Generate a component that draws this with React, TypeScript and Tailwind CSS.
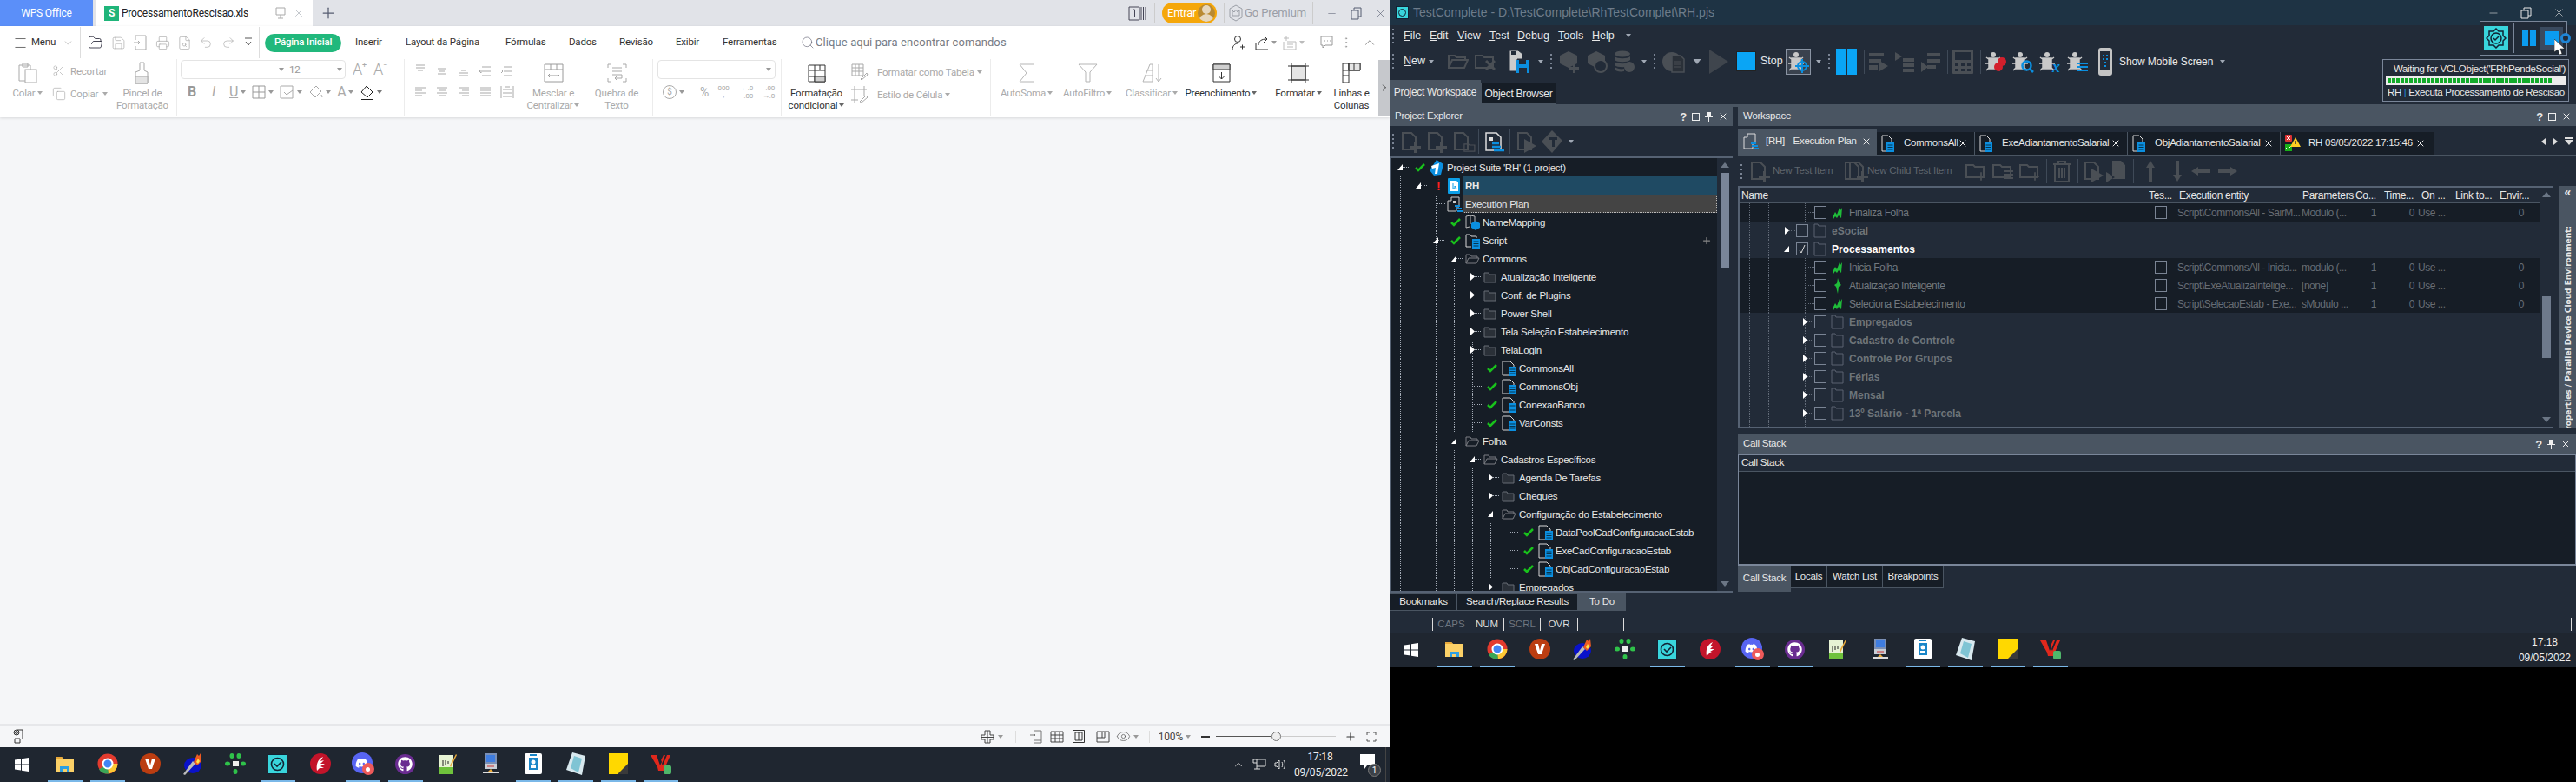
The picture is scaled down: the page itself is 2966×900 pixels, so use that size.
import React from "react";
import { Scissors, Copy, FolderOpen, Save, Printer, Undo2, Redo2, Search, ChevronDown, ChevronUp, ChevronRight, X, Minus, Plus, Menu, FileSearch, EllipsisVertical, Eye } from "lucide-react";
import { FaGithub, FaDiscord } from "react-icons/fa";

const Caret = ({ c = "#999", cls = "" }: { c?: string; cls?: string }) => (
  <svg width="6" height="4" viewBox="0 0 6 4" className={cls}><path d="M0 0h6L3 4z" fill={c} /></svg>
);
const G = "#a9a9a9";
const Sv = ({ w = 22, h = 22, vb = "0 0 22 22", c = G, sw = 1, children }: any) => (
  <svg width={w} height={h} viewBox={vb} fill="none" stroke={c} strokeWidth={sw}>{children}</svg>
);

/* ---------- WPS ribbon drawings ---------- */
const Paste = () => <Sv w={22} h={24} vb="0 0 22 24"><path d="M4 3h10v18H1V3zM5 1h6v4H5z" /><rect x="8" y="8" width="13" height="15" fill="#fff" /></Sv>;
const Brush = () => <Sv w={20} h={26} vb="0 0 20 26"><path d="M7 1h5v9l4 2v13H2V12l5-2z" /><path d="M2 17h14v8H2z" fill="#e4e4e4" /></Sv>;
const Lines = ({ k }: { k: number }) => {
  const d = ["M3 4h10M5 7h6M3 1h10", "M3 5h10M5 8h6M3 11h10", "M5 7h6M3 10h10M3 13h10", "M4 3h10M4 8h10M4 13h10M1 8l2-2v4z", "M4 3h10M4 8h10M4 13h10M1 6l2 2-2 2",
    "M2 3h12M2 6h8M2 9h12M2 12h8", "M2 3h12M4 6h8M2 9h12M4 12h8", "M2 3h12M6 6h8M2 9h12M6 12h8", "M2 3h12M2 6h12M2 9h12M2 12h12", "M1 1v14M15 1v14M3 5h10M3 9h10M3 13h10M5 2h6"][k];
  return <Sv w={16} h={16} vb="0 0 16 16"><path d={d} /></Sv>;
};
const Merge = () => <Sv w={23} h={22} vb="0 0 23 22" c="#9a9a9a"><path d="M1 1h21v20H1zM1 7h21M8 1v6M15 1v6M5 14h13M5 14l2-2M5 14l2 2M18 14l-2-2M18 14l-2 2" /></Sv>;
const Wrap = () => <Sv w={23} h={22} vb="0 0 23 22"><path d="M1 5V1h4M18 1h4v4M1 17v4h4M22 17v4h-4M6 5h11M6 9h11M6 13h11v4H9M9 17l2-2M9 17l2 2" /></Sv>;
const CondF = () => <Sv w={21} h={21} vb="0 0 21 21" c="#333"><path d="M1 1h19v19H1zM1 7h19M1 14h19M8 1v19M14 1v6" /><path d="M8 14h12v6H8z" fill="#cfcfcf" /></Sv>;
const TableF = () => <Sv w={20} h={20} vb="0 0 20 20"><path d="M1 1h13v13H1zM1 5h13M1 9h13M5 1v13M9 1v13M11 18l7-7 1 2-7 6z" /></Sv>;
const StyleF = () => <Sv w={20} h={20} vb="0 0 20 20"><path d="M4 0v20M0 4h18M15 0v12M0 16h8M10 18l7-7 2 2-7 6z" /></Sv>;
const SigmaI = () => <Sv w={20} h={22} vb="0 0 20 22" c="#b5b5b5"><path d="M18 1H2l8 10-8 10h16" /></Sv>;
const Fun = () => <Sv w={23} h={22} vb="0 0 23 22" c="#b5b5b5"><path d="M1 1h21l-8 9v11H9V10z" /></Sv>;
const Sort = () => <Sv w={23} h={22} vb="0 0 23 22" c="#b5b5b5"><path d="M1 21L9 1h3v20zM3 14h9M5 8h7M19 1v20M19 21l-3-4M19 21l3-4" /></Sv>;
const Fill = () => <Sv w={21} h={22} vb="0 0 21 22" c="#333"><path d="M1 1h19v20H1zM1 7h19" /><path d="M1 1h19v6H1z" fill="#cfcfcf" /><path d="M10.500 10v8M10.500 18l-3-3M10.500 18l3-3" /></Sv>;
const Fmt = () => <Sv w={24} h={22} vb="0 0 24 22" c="#333"><path d="M4 3h16v16H4z" fill="#e4e4e4" /><path d="M4 0v22M20 0v22M0 3h24M0 19h24" /></Sv>;
const RC = () => <Sv w={22} h={24} vb="0 0 22 24" c="#333"><path d="M1 1h20v8H1zM1 9v14h7V1M14 1v8" /><path d="M8 1h13v8H8z" fill="#e4e4e4" /><path d="M1 15h7M8 1v8M14 1v8" /></Sv>;

/* ---------- Task bar ---------- */
const tbIcons: [React.ReactNode, boolean][] = [
  [<svg width="23" height="20" viewBox="0 0 23 20"><path d="M1 2h7l2 2h12v15H1z" fill="#fbd067" /><path d="M1 2h7l2 2H1z" fill="#e8a93a" /><path d="M6 13h11v6h-3v-3H9v3H6z" fill="#2d9fe3" /></svg>, true],
  [<svg width="24" height="24" viewBox="0 0 24 24"><circle cx="12" cy="12" r="11.500" fill="#e33b2e" /><path d="M12 12L2 18.500A11.500 11.500 0 0 0 13 23.500z" fill="#3aa757" /><path d="M12 12h11.500A11.500 11.500 0 0 1 13 23.500z" fill="#fcc934" /><circle cx="12" cy="12" r="5.500" fill="#4285f4" stroke="#fff" strokeWidth="2" /></svg>, true],
  [<svg width="24" height="24" viewBox="0 0 24 24"><circle cx="12" cy="12" r="12" fill="#bb3d11" /><path d="M6 6h4l2 8 2-8h4l-4 12h-4z" fill="#fff" /></svg>, false],
  [<svg width="24" height="26" viewBox="0 0 24 26"><ellipse cx="12" cy="15" rx="10" ry="9" fill="#0a12c9" /><path d="M1 25L12 10l3 3L3 26z" fill="#bbb" /><path d="M13 11l4-9 2 2 2-3 1 9-5 5z" fill="#ef5a22" /><path d="M16 11l2-4 2 3-2 3z" fill="#fce24b" /></svg>, false],
  [<svg width="24" height="24" viewBox="0 0 24 24" fill="#2fc24a"><rect x="9" y="9" width="7" height="6" fill="#eee" /><ellipse cx="8" cy="3" rx="2.500" ry="3" /><ellipse cx="16" cy="3" rx="2.500" ry="3" /><ellipse cx="3" cy="12" rx="3" ry="2.500" /><ellipse cx="21" cy="12" rx="3" ry="2.500" /><ellipse cx="12" cy="21" rx="2.500" ry="3" /></svg>, false],
  [<svg width="23" height="23" viewBox="0 0 23 23"><rect width="23" height="23" fill="#39d5dc" stroke="#123" strokeWidth="2" /><circle cx="11.500" cy="11.500" r="7" fill="none" stroke="#123" strokeWidth="1.600" /><path d="M8 11l3 3 5-5" fill="none" stroke="#123" strokeWidth="1.600" /></svg>, true],
  [<svg width="24" height="24" viewBox="0 0 24 24"><circle cx="12" cy="12" r="12" fill="#c3142a" /><path d="M8 20c-1-6 0-13 7-16l-3 5 4-1-4 4 5 0-5 3 4 2-5 0z" fill="#fff" /></svg>, false],
  [<div className="relative w-[26px] h-[26px]"><div className="w-[24px] h-[24px] rounded-full bg-[#5865f2] flex items-center justify-center"><FaDiscord size={15} color="#fff" /></div><div className="absolute right-0 bottom-0 w-[14px] h-[14px] rounded-full bg-[#ee5a5a] flex items-center justify-center"><div className="w-[5px] h-[5px] bg-white rounded-full" /></div></div>, true],
  [<div className="w-[23px] h-[23px] rounded-full bg-[#6a2c91] flex items-center justify-center"><FaGithub size={17} color="#fff" /></div>, true],
  [<svg width="22" height="25" viewBox="0 0 22 25"><path d="M1 2h16v22H1z" fill="#e7f3d4" /><path d="M1 16h16v8H1z" fill="#6fc23c" /><path d="M5 8v7M8 8v5M11 9v3" stroke="#222" /><path d="M13 14l7-13 1 1-7 14z" fill="#e8a93a" /></svg>, false],
  [<svg width="20" height="24" viewBox="0 0 20 24"><rect x="3" y="0" width="14" height="12" fill="#7a8fb5" /><rect x="5" y="2" width="10" height="8" fill="#3f7de0" /><rect x="3" y="12" width="14" height="6" fill="#c9ced6" /><path d="M6 15h8" stroke="#c33" /><path d="M10 18l-3 3h6z" fill="#e8a93a" /><path d="M1 22h18" stroke="#ddd" strokeWidth="2" /></svg>, false],
  [<svg width="20" height="24" viewBox="0 0 20 24"><rect width="20" height="24" rx="2" fill="#fff" /><rect x="6" y="1" width="8" height="2" fill="#1a86c8" /><rect x="5" y="5" width="10" height="14" fill="#1a86c8" /><circle cx="10" cy="10" r="2.500" fill="#fff" /><path d="M7 17h6v-3H7z" fill="#fff" /></svg>, true],
  [<svg width="22" height="26" viewBox="0 0 22 26"><path d="M7 0l15 4-4 22L0 20z" fill="#d8e8ee" /><path d="M9 4l9 3-4 16-9-5z" fill="#7fc4d4" /></svg>, true],
  [<svg width="22" height="24" viewBox="0 0 22 24"><rect width="22" height="24" fill="#ffd800" /><path d="M22 12v12H10z" fill="#3a3a3a" /></svg>, true],
  [<svg width="26" height="24" viewBox="0 0 26 24"><path d="M1 2h8l3 8 4-8h8l-8 18h-6l-1-4z" fill="#e0281c" /><path d="M8 2h3l3 8-2 4zM18 2l2 0-5 12-1-2z" fill="#1b2330" /><rect x="16" y="14" width="9" height="10" rx="2" fill="#4fb66a" /></svg>, true],
];
function Taskbar({ children }: { children?: React.ReactNode }) {
  return (
    <div className="h-[40px] bg-[#1f2630] flex shrink-0">
      <div className="w-[50px] flex items-center justify-center">
        <svg width="16" height="16" viewBox="0 0 16 16" fill="#fff"><path d="M0 2.500l7-1v6H0zM8 1.300l8-1.300v7.500H8zM0 8.500h7v6l-7-1zM8 8.500h8V16l-8-1.200z" /></svg>
      </div>
      {tbIcons.map(([ic, on], i) => (
        <div key={i} className={"w-[40px] mx-[4.5px] flex items-center justify-center border-b-2 " + (on ? "border-[#7ab8e8]" : "border-transparent")}>{ic}</div>
      ))}
      {children}
    </div>
  );
}

/* ---------- WPS ---------- */
const Big = ({ icon, l1, l2, dim, w }: any) => (
  <div className={"flex flex-col items-center shrink-0 " + w + (dim ? " text-[#aaaaaa]" : " text-[#333333]")}>
    <div className="h-[32px] flex items-center justify-center">{icon}</div>
    <div className="h-[14px] leading-[14px] flex items-center gap-[2px] whitespace-nowrap">{l1}{!l2 && <Caret c={dim ? "#aaa" : "#666"} />}</div>
    {l2 && <div className="h-[14px] leading-[14px] flex items-center gap-[2px] whitespace-nowrap">{l2}</div>}
  </div>
);

function Wps() {
  const tabs: [string, string][] = [["Inserir", "w-[58px]"], ["Layout da Página", "w-[115px]"], ["Fórmulas", "w-[73px]"], ["Dados", "w-[58px]"], ["Revisão", "w-[65px]"], ["Exibir", "w-[54px]"], ["Ferramentas", "w-[90px]"]];
  return (
    <div className="w-[1600px] h-[900px] flex flex-col shrink-0 font-['Roboto',sans-serif] text-[11.5px] tracking-[-0.2px] bg-[#f5f6f8]">
      <div className="h-[30px] bg-[#e1e3e8] flex shrink-0 text-[#333]">
        <div className="w-[107px] bg-[#5b8ff9] text-white text-[12px] flex items-center justify-center">WPS Office</div>
        <div className="ml-[3px] w-[250px] bg-white flex items-center pl-[10px]">
          <div className="w-[17px] h-[17px] bg-[#1fb57a] text-white text-[12px] leading-[17px] text-center font-bold">S</div>
          <span className="ml-[3px] text-[12px] tracking-[-0.2px] text-[#222]">ProcessamentoRescisao.xls</span>
          <svg className="ml-auto" width="12" height="14" viewBox="0 0 12 14" fill="none" stroke="#a9a9a9"><path d="M1 1h10v8H1zM6 9v4M3 13h6" /></svg>
          <X size={14} strokeWidth={1} color="#9aa0a8" className="ml-[8px] mr-[9px]" />
        </div>
        <Plus size={20} strokeWidth={1.500} color="#555c70" className="ml-[8px] self-center" />
        <div className="ml-[911px] flex items-center">
          <svg width="21" height="17" viewBox="0 0 21 17" fill="none" stroke="#445"><path d="M1 1h12v15H1zM15 1v15M17.500 1v15M20 1v15" /><path d="M6 4h1.500v9" /></svg>
          <div className="w-px h-[22px] bg-[#ccc] ml-[9px]" />
          <div className="ml-[8px] w-[63px] h-[24px] bg-[#f5a70a] rounded-full flex items-center pl-[6px] text-white text-[13px]">Entrar
            <div className="ml-auto mr-[2px] w-[20px] h-[20px] rounded-full bg-[#b98a32] flex flex-col items-center overflow-hidden">
              <div className="w-[10px] h-[10px] mt-[1px] rounded-full bg-[#e6d7bd]" /><div className="w-[18px] h-[10px] rounded-t-full bg-[#e6d7bd]" />
            </div>
          </div>
          <div className="w-px h-[22px] bg-[#ccc] ml-[8px]" />
          <svg className="ml-[5px]" width="16" height="20" viewBox="0 0 16 20" fill="none" stroke="#9a9ea6"><path d="M8 1l7 4v10l-7 4-7-4V5z" /><path d="M4 13V7l2 2 2-3 2 3 2-2v6z" /></svg>
          <span className="ml-[2px] text-[#9a9ea6] text-[13px] tracking-[-0.1px] w-[66px] whitespace-nowrap">Go Premium</span>
          <div className="w-px h-[26px] bg-[#ccc] ml-[12px]" />
          <Minus size={13} strokeWidth={1} color="#555c70" className="ml-[15px]" />
          <svg className="ml-[15px]" width="13" height="15" viewBox="0 0 13 15" fill="none" stroke="#555c70"><path d="M1 4h8v10H1zM4 4V1h8v10H9" /></svg>
          <X size={15} strokeWidth={1} color="#555c70" className="ml-[14px]" />
        </div>
      </div>

      <div className="bg-white h-[105px] shrink-0 shadow-[0_1px_3px_rgba(0,0,0,0.12)] relative">
        <div className="h-[38px] flex items-center text-[#333]">
          <Menu size={17} strokeWidth={1} color="#333" className="ml-[15px]" />
          <span className="ml-[4px] w-[30px]">Menu</span>
          <ChevronDown size={13} strokeWidth={1} color="#888" className="ml-[6px]" />
          <div className="w-px h-[36px] bg-[#ddd] ml-[7px]" />
          <FolderOpen size={18} strokeWidth={1.100} color="#223" className="ml-[8px]" />
          <Save size={17} strokeWidth={1} color={G} className="ml-[9px]" />
          <svg className="ml-[8px]" width="16" height="18" viewBox="0 0 16 18" fill="none" stroke={G}><path d="M3 6V1h12v16H3v-4M1 9h7l-2-2M8 9l-2 2" /></svg>
          <Printer size={17} strokeWidth={1} color={G} className="ml-[10px]" />
          <FileSearch size={17} strokeWidth={1} color={G} className="ml-[8px]" />
          <Undo2 size={16} strokeWidth={1} color={G} className="ml-[8px]" />
          <Redo2 size={16} strokeWidth={1} color={G} className="ml-[10px]" />
          <svg className="ml-[11px]" width="8" height="12" viewBox="0 0 8 12" fill="none" stroke="#555"><path d="M0 1h8M1 5l3 4 3-4" /></svg>
          <div className="w-px h-[36px] bg-[#ddd] ml-[8px]" />
          <div className="ml-[6px] mr-[16px] w-[88px] h-[21px] rounded-full bg-[#21b87c] text-white flex items-center justify-center font-medium whitespace-nowrap">Página Inicial</div>
          {tabs.map(([t, w]) => <span key={t} className={w + " whitespace-nowrap shrink-0"}>{t}</span>)}
          <Search size={16} strokeWidth={1} color="#667" />
          <span className="ml-[1px] text-[#777c85] text-[13px] tracking-[0.1px] w-[230px] whitespace-nowrap">Clique aqui para encontrar comandos</span>
          <div className="ml-auto flex items-center mr-[14px]">
            <svg width="15" height="18" viewBox="0 0 15 18" fill="none" stroke="#333"><circle cx="7" cy="5" r="3.500" /><path d="M1 17c0-5 4-7 6-7M10 14h5M12.500 11.500v5" /></svg>
            <svg className="ml-[12px]" width="16" height="18" viewBox="0 0 16 18" fill="none" stroke="#333"><path d="M1 9v8h14M4 12c0-5 4-7 9-7M10 1l4 4-4 4" /></svg>
            <Caret c="#999" cls="ml-[3px]" />
            <svg className="ml-[7px]" width="16" height="18" viewBox="0 0 16 18" fill="none" stroke="#bbb"><path d="M4 1v6M1 4h6M5 8h10v9H1V8M5 11h7M5 14h7" /></svg>
            <Caret c="#bbb" cls="ml-[3px]" />
            <div className="w-px h-[22px] bg-[#ddd] ml-[7px]" />
            <svg className="ml-[10px]" width="15" height="16" viewBox="0 0 15 16" fill="none" stroke="#999"><path d="M1 1h13v10H6l-3 3v-3H1zM5 6h1M8 6h1M11 6h1" /></svg>
            <EllipsisVertical size={16} strokeWidth={1.200} color="#999" className="ml-[7px]" />
            <ChevronUp size={18} strokeWidth={1} color="#666" className="ml-[10px]" />
          </div>
        </div>
        <div className="flex h-[65px] leading-[14px] overflow-hidden">
          {/* clipboard */}
          <div className="w-[204px] flex border-r border-[#ececec] shrink-0 text-[#aaaaaa]">
            <Big w="w-[47px] ml-[8px]" icon={<Paste />} l1="Colar" dim />
            <div className="w-[70px] pl-[5px] flex flex-col shrink-0">
              <div className="h-[25px] mt-[1px] flex items-center gap-[6px]"><Scissors size={15} strokeWidth={1} color={G} />Recortar</div>
              <div className="h-[27px] flex items-center gap-[5px]"><Copy size={16} strokeWidth={1} color={G} />Copiar<Caret c="#aaa" /></div>
            </div>
            <Big w="w-[78px]" icon={<Brush />} l1="Pincel de" l2="Formatação" dim />
          </div>
          {/* font */}
          <div className="w-[262px] pl-[4px] border-r border-[#ececec] shrink-0 text-[#aaaaaa]">
            <div className="flex items-center">
              <div className="w-[190px] h-[22px] mt-[1px] border border-[#e4e4e4] rounded-sm flex items-center">
                <div className="w-[122px] h-full border-r border-[#e4e4e4] flex items-center justify-end pr-[3px]"><Caret c="#999" /></div>
                <span className="ml-[2px] text-[#999]">12</span><Caret c="#999" cls="ml-auto mr-[3px]" />
              </div>
              <span className="ml-[8px] text-[18px] font-light">A</span><span className="text-[9px] -mt-[10px]">+</span>
              <span className="ml-[8px] text-[18px] font-light">A</span><span className="text-[9px] -mt-[10px]">−</span>
            </div>
            <div className="flex items-center h-[18px] mt-[6px] text-[#aaa]">
              <span className="ml-[8px] text-[16px] font-bold text-[#999] w-[18px]">B</span>
              <span className="ml-[10px] text-[16px] italic w-[14px]">I</span>
              <span className="ml-[6px] text-[16px] underline">U</span><Caret cls="ml-[3px]" />
              <svg className="ml-[7px]" width="16" height="16" viewBox="0 0 16 16" fill="none" stroke="#999"><path d="M1 1h14v14H1zM8 1v14M1 8h14" /></svg><Caret cls="ml-[3px]" />
              <svg className="ml-[7px]" width="17" height="16" viewBox="0 0 17 16" fill="none" stroke="#aaa"><path d="M1 1h14v14H1zM8 4l1 1M5 8l3 3 7-5" /></svg><Caret cls="ml-[3px]" />
              <svg className="ml-[7px]" width="17" height="16" viewBox="0 0 17 16" fill="none" stroke="#aaa"><path d="M2 8l7-7 6 6-7 7z" /><path d="M15 11l1 3" /></svg><Caret cls="ml-[3px]" />
              <span className="ml-[7px] text-[16px]">A</span><Caret cls="ml-[3px]" />
              <svg className="ml-[7px]" width="17" height="17" viewBox="0 0 17 17" fill="#222"><path d="M8 1l7 7-6 6-7-6z" fill="none" stroke="#222" /><path d="M2 16h13v1H2z" /></svg><Caret c="#777" cls="ml-[3px]" />
            </div>
          </div>
          {/* alignment */}
          <div className="w-[286px] pl-[5px] flex border-r border-[#ececec] shrink-0">
            <div className="w-[125px] shrink-0 grid grid-cols-5 grid-rows-2 pt-[2px] h-[50px]">
              {[0, 1, 2, 3, 4, 5, 6, 7, 8, 9].map((k) => <div key={k} className="flex items-center justify-center"><Lines k={k} /></div>)}
            </div>
            <Big w="w-[74px] ml-[4px]" icon={<Merge />} l1="Mesclar e" l2={<>Centralizar<Caret c="#aaa" /></>} dim />
            <Big w="w-[72px]" icon={<Wrap />} l1="Quebra de" l2="Texto" dim />
          </div>
          {/* number */}
          <div className="w-[148px] pl-[5px] border-r border-[#ececec] shrink-0 text-[#aaa]">
            <div className="w-[136px] h-[22px] mt-[1px] border border-[#e4e4e4] rounded-sm flex items-center justify-end pr-[4px]"><Caret c="#999" /></div>
            <div className="flex items-center h-[18px] mt-[6px]">
              <div className="ml-[6px] w-[16px] h-[16px] rounded-full border border-[#aaa] text-[10px] text-center leading-[14px]">$</div><Caret cls="ml-[3px]" />
              <span className="ml-[18px] text-[14px]">%</span>
              <span className="ml-[8px] text-[8px] leading-[8px] w-[18px] text-center">000<br />,</span>
              <span className="ml-[7px] text-[8px] leading-[9px] w-[18px] text-right">←.0<br />.00</span>
              <span className="ml-[7px] text-[8px] leading-[9px] w-[18px] text-right">.00<br />→.0</span>
            </div>
          </div>
          {/* styles */}
          <div className="w-[241px] flex border-r border-[#ececec] shrink-0">
            <Big w="w-[80px]" icon={<CondF />} l1="Formatação" l2={<>condicional<Caret c="#666" /></>} />
            <div className="flex flex-col text-[#aaa]">
              <div className="h-[26px] mt-[2px] flex items-center gap-[10px] whitespace-nowrap"><TableF /><span className="flex items-center gap-[3px]">Formatar como Tabela<Caret c="#aaa" /></span></div>
              <div className="h-[26px] flex items-center gap-[10px] whitespace-nowrap"><StyleF /><span className="flex items-center gap-[3px]">Estilo de Célula<Caret c="#aaa" /></span></div>
            </div>
          </div>
          <div className="w-[323px] flex border-r border-[#ececec] shrink-0">
            <Big w="w-[82px]" icon={<SigmaI />} l1="AutoSoma" dim />
            <Big w="w-[58px]" icon={<Fun />} l1="AutoFiltro" dim />
            <Big w="w-[90px]" icon={<Sort />} l1="Classificar" dim />
            <Big w="w-[70px]" icon={<Fill />} l1="Preenchimento" />
          </div>
          <Big w="w-[62px]" icon={<Fmt />} l1="Formatar" />
          <Big w="w-[60px]" icon={<RC />} l1="Linhas e" l2="Colunas" />
        </div>
        <div className="absolute right-0 top-[39px] w-[13px] h-[64px] bg-[#c6c8cc] flex items-center justify-center"><ChevronRight size={12} color="#333" /></div>
      </div>

      <div className="flex-1" />
      <div className="h-[27px] shrink-0 border-t-2 border-[#e6e7ea] flex items-center">
        <svg className="ml-[15px]" width="12" height="17" viewBox="0 0 12 17" fill="none" stroke="#333"><circle cx="4" cy="4" r="3" /><circle cx="4" cy="4" r="1.500" /><path d="M4 1h7v10M8 11H2v5h6z" /></svg>
        <div className="ml-auto flex items-center mr-[15px]">
          <svg width="16" height="16" viewBox="0 0 16 16" fill="none" stroke="#444"><path d="M5 1h6v5h4v5h-4v4H5v-4H1V6h4zM1 8.500h14M8 1v14" /></svg>
          <Caret cls="ml-[4px]" />
          <div className="w-px h-[14px] bg-[#ddd] ml-[14px]" />
          <svg className="ml-[16px]" width="14" height="16" viewBox="0 0 14 16" fill="none" stroke="#777"><path d="M4 1h9v14H4M4 12h9M0 6h6M4 4l2 2-2 2" /></svg>
          <svg className="ml-[9px]" width="16" height="14" viewBox="0 0 16 14" fill="none" stroke="#444"><path d="M1 1h14v12H1zM1 5h14M1 9h14M6 1v12M11 1v12" /></svg>
          <svg className="ml-[10px]" width="14" height="15" viewBox="0 0 14 15" fill="none" stroke="#333"><path d="M0.500 0.500h13v14H0.500zM3 3h8v9H3zM7 3v9" /></svg>
          <svg className="ml-[13px]" width="16" height="14" viewBox="0 0 16 14" fill="none" stroke="#444"><path d="M1 1h14v12H1zM1 8h6V1M7 8h3V1" /></svg>
          <Eye size={17} strokeWidth={1} color="#555" className="ml-[7px]" />
          <Caret cls="ml-[3px]" />
          <div className="w-px h-[14px] bg-[#ddd] ml-[12px]" />
          <span className="ml-[10px] text-[#444] text-[12px]">100%</span>
          <Caret cls="ml-[3px]" />
          <div className="ml-[12px] w-[10px] h-[2px] bg-[#333]" />
          <div className="ml-[7px] w-[138px] flex items-center">
            <div className="w-[64px] h-px bg-[#555]" />
            <div className="w-[11px] h-[11px] rounded-full border border-[#777] bg-[#eee] shrink-0" />
            <div className="flex-1 h-px bg-[#ccc]" />
          </div>
          <Plus size={14} strokeWidth={2} color="#333" className="ml-[10px]" />
          <svg className="ml-[11px]" width="12" height="12" viewBox="0 0 12 12" fill="none" stroke="#555"><path d="M1 4V1h3M8 1h3v3M1 8v3h3M8 11h3V8" /></svg>
        </div>
      </div>
      <Taskbar>
        <div className="flex-1 flex items-center justify-end pr-[4px] text-white">
          <ChevronUp size={14} strokeWidth={1.500} color="#ddd" />
          <svg className="ml-[9px]" width="16" height="14" viewBox="0 0 16 14" fill="none" stroke="#ddd"><path d="M1 1h14v8H5V1M5 9v3M2 12h7M1 1v4h4" /></svg>
          <svg className="ml-[9px]" width="14" height="12" viewBox="0 0 14 12" fill="none" stroke="#ddd"><path d="M1 4h2l3-3v10L3 8H1zM9 3c1 2 1 4 0 6M11 1c2 3 2 7 0 10" /></svg>
          <div className="ml-[9px] w-[60px] text-center text-[#eee] text-[12px] leading-[18px]">17:18<br />09/05/2022</div>
          <div className="ml-[16px] relative w-[24px] h-[24px]">
            <svg width="17" height="18" viewBox="0 0 17 18" fill="#fff"><path d="M0 0h17v13H8l-3 4v-4H0z" /></svg>
            <div className="absolute right-[0px] bottom-[-2px] w-[15px] h-[15px] rounded-full bg-[#3c4148] border border-[#777] text-[10px] text-center leading-[13px]">1</div>
          </div>
          <div className="ml-[5px] w-px h-[40px] bg-[#444]" />
        </div>
      </Taskbar>
    </div>
  );
}

/* ---------- TestComplete drawings ---------- */
const D = "#4a4f55";
const Doc = ({ c = D, children }: any) => (
  <svg width="24" height="26" viewBox="0 0 24 26" fill="none">
    <path d="M3 3h10l5 5v14H3z" stroke={c} strokeWidth="2" />
    {children}
  </svg>
);
const DocPlus = () => <Doc><path d="M16 13h3v5h5v3h-5v5h-3v-5h-5v-3h5z" fill={D} /></Doc>;
const DocRun = () => <Doc><path d="M10 10l14 8-14 8z" fill={D} /></Doc>;
const Fold = ({ c = D, w = 24, h = 20 }: any) => <svg width={w} height={h} viewBox="0 0 24 20" fill="none" stroke={c} strokeWidth="2"><path d="M1 3h8l2 2h10v12H1z" /></svg>;
const FoldOpen = ({ c = D, w = 24, h = 20 }: any) => <svg width={w} height={h} viewBox="0 0 24 20" fill="none" stroke={c} strokeWidth="2"><path d="M1 17V3h7l2 2h10v3M1 17l4-9h18l-4 9z" /></svg>;
const Cube = ({ children }: any) => <svg width="24" height="26" viewBox="0 0 24 26" fill={D}><path d="M11 1l10 5v9l-10 5-10-5V6z" />{children}</svg>;
const Bug = ({ children, w = 24 }: any) => (
  <svg width={w} height="24" viewBox="0 0 24 24" fill="#c9c9c9">
    <circle cx="9" cy="4" r="3" /><path d="M4 8h10v12H4zM1 7l4 3M17 7l-4 3M0 14h5M18 14h-5M1 22l4-4M17 22l-4-4" stroke="#c9c9c9" strokeWidth="1.500" />
    {children}
  </svg>
);
const Rows = () => <svg width="24" height="24" viewBox="0 0 24 24" fill={D}><path d="M1 2h17v4H1zM1 9h14v4H1zM1 16h10v5H1z" /><path d="M13 11l10 6-10 6z" /></svg>;
const Rows2 = () => <svg width="24" height="24" viewBox="0 0 24 24" fill={D}><path d="M1 1l8 5-8 5zM10 8h13v4H10zM10 14h13v4H10zM10 20h13v4H10z" /></svg>;
const Rows3 = () => <svg width="24" height="24" viewBox="0 0 24 24" fill={D}><path d="M8 2h15v4H8zM8 9h15v4H8zM8 16h10v4H8zM1 12l8 6-8 6z" /></svg>;
const GripV = ({ cls = "" }: { cls?: string }) => (
  <div className={"flex flex-col gap-[3px] " + cls}>{[0, 1, 2, 3].map((i) => <div key={i} className="w-[2px] h-[2px] bg-[#7a8494]" />)}</div>
);
const Sep = ({ cls = "" }: { cls?: string }) => <div className={"w-px h-[28px] bg-[#3f4a58] " + cls} />;

const FileBlue = () => (
  <svg width="20" height="18" viewBox="0 0 20 18" fill="none"><path d="M1 1h9l4 4v12H1z" stroke="#d8d8d8" /><rect x="8" y="7" width="9" height="11" fill="#0b8fe0" /><path d="M9.500 10h6M9.500 12.500h6M9.500 15h6" stroke="#04344f" /></svg>
);
const FolderC = () => <svg width="15" height="14" viewBox="0 0 15 14"><path d="M1 2h5l1 2h7v9H1z" fill="#2a3038" stroke="#666c74" /></svg>;
const FolderO = () => <svg width="17" height="14" viewBox="0 0 17 14" fill="none" stroke="#7c7f84"><path d="M1 12V2h5l1 2h7v2M1 12l3-6h12l-3 6z" /></svg>;
const Check = () => <svg width="12" height="10" viewBox="0 0 12 10" fill="none" stroke="#19c21c" strokeWidth="2.500"><path d="M1 5l3 3 7-7" /></svg>;
const Exp = ({ open, x }: { open: boolean; x: number }) => (
  <svg className="absolute top-[6px]" style={{ left: x - 3 }} width="7" height="9" viewBox="0 0 7 9" fill="#fff">
    {open ? <path d="M6 1v7H0z" /> : <path d="M1 0l5 4.500L1 9z" />}
  </svg>
);

type TreeR = { t: string; x: number; icon: string; check?: boolean; exp?: [number, boolean]; stub?: number; g: number[]; bold?: boolean; sel?: string; plus?: boolean; err?: boolean };
const g1 = [12, 53], g2 = [12, 53, 74], g3 = [12, 53, 74, 95], g4 = [12, 53, 74, 95, 116];
const tree: TreeR[] = [
  { t: "Project Suite 'RH' (1 project)", x: 46, icon: "suite", check: true, exp: [12, true], g: [] },
  { t: "RH", x: 67, icon: "rh", exp: [33, true], g: [12], bold: true, sel: "rh", err: true },
  { t: "Execution Plan", x: 66, icon: "plan", stub: 53, g: g1, sel: "plan" },
  { t: "NameMapping", x: 87, icon: "map", check: true, stub: 53, g: g1 },
  { t: "Script", x: 87, icon: "script", check: true, exp: [53, true], g: g1, plus: true },
  { t: "Commons", x: 87, icon: "open", exp: [74, true], g: g1 },
  { t: "Atualização Inteligente", x: 108, icon: "fold", exp: [95, false], g: g2 },
  { t: "Conf. de Plugins", x: 108, icon: "fold", exp: [95, false], g: g2 },
  { t: "Power Shell", x: 108, icon: "fold", exp: [95, false], g: g2 },
  { t: "Tela Seleção Estabelecimento", x: 108, icon: "fold", exp: [95, false], g: g2 },
  { t: "TelaLogin", x: 108, icon: "fold", exp: [95, false], g: g3 },
  { t: "CommonsAll", x: 129, icon: "file", check: true, stub: 95, g: g3 },
  { t: "CommonsObj", x: 129, icon: "file", check: true, stub: 95, g: g3 },
  { t: "ConexaoBanco", x: 129, icon: "file", check: true, stub: 95, g: g3 },
  { t: "VarConsts", x: 129, icon: "file", check: true, stub: 95, g: g3 },
  { t: "Folha", x: 87, icon: "open", exp: [74, true], g: g1 },
  { t: "Cadastros Específicos", x: 108, icon: "open", exp: [95, true], g: g2 },
  { t: "Agenda De Tarefas", x: 129, icon: "fold", exp: [116, false], g: g3 },
  { t: "Cheques", x: 129, icon: "fold", exp: [116, false], g: g3 },
  { t: "Configuração do Estabelecimento", x: 129, icon: "open", exp: [116, true], g: g3 },
  { t: "DataPoolCadConfiguracaoEstab", x: 171, icon: "file", check: true, stub: 137, g: g4 },
  { t: "ExeCadConfiguracaoEstab", x: 171, icon: "file", check: true, stub: 137, g: g4 },
  { t: "ObjCadConfiguracaoEstab", x: 171, icon: "file", check: true, stub: 137, g: g4 },
  { t: "Empregados", x: 129, icon: "fold", exp: [116, false], g: g3 },
];
const TreeIcon = ({ k }: { k: string }) => {
  if (k === "suite") return <svg width="16" height="18" viewBox="0 0 16 18"><path d="M8 0l8 5-3 12-8 1-5-6z" fill="#0c8fe0" /><path d="M2 7l9-3-2 12h-3l1-7-4 1z" fill="#fff" /></svg>;
  if (k === "rh") return <svg width="16" height="18" viewBox="0 0 16 18"><rect width="14" height="18" rx="1" fill="#0c9fe8" /><path d="M3 3h7l2 2v10H3z" fill="#fff" /><path d="M6 6v6h2V9l2 3" stroke="#0c9fe8" fill="none" /></svg>;
  if (k === "plan") return <svg width="18" height="18" viewBox="0 0 18 18" fill="none"><path d="M3 5h2V1h9v11h-3M3 5H1v12h10v-4" stroke="#ccc" /><path d="M7 5h3v3H7z" fill="#ccc" /><path d="M9 11h6M10 14h7M12 17h6" stroke="#0b8fe0" strokeWidth="2" /></svg>;
  if (k === "map") return <svg width="18" height="18" viewBox="0 0 18 18" fill="none"><path d="M1 2l5-1 5 1v6M1 2v13l4-1M6 1v10" stroke="#bbb" /><path d="M12 7l5 3v5l-5 3-5-3v-5z" fill="#0b8fe0" /></svg>;
  if (k === "script") return <svg width="18" height="18" viewBox="0 0 18 18" fill="none"><path d="M1 2h5l1 2h6v2M1 2v14h6" stroke="#d8d8d8" /><rect x="8" y="7" width="9" height="11" fill="#0b8fe0" /><path d="M9.500 10h6M9.500 12.500h6M9.500 15h6" stroke="#04344f" /></svg>;
  if (k === "open") return <FolderO />;
  if (k === "fold") return <FolderC />;
  return <FileBlue />;
};
const Guides = ({ g, stub, color = "border-[#a3abb6]" }: any) => (
  <>
    {g.map((x: number) => <span key={x} className={"absolute top-0 bottom-0 border-l border-dotted " + color} style={{ left: x }} />)}
    {stub !== undefined && <span className={"absolute top-[10px] w-[11px] border-t border-dotted " + color} style={{ left: stub }} />}
  </>
);

function Tree() {
  return (
    <div className="h-[502px] border-[2px] border-[#566273] border-r-0 flex bg-[#161d26] w-[395px] relative">
      <div className="w-[375px] overflow-hidden text-[#e8e8e8]">
        {tree.map((r) => (
          <div key={r.t} className="relative h-[21px] flex items-center" style={{ paddingLeft: r.x - (r.check ? 17 : 0) - 2 }}>
            <Guides g={r.g.map((x) => x - 2)} stub={r.stub !== undefined ? r.stub - 2 : undefined} />
            {r.exp && <><span className="absolute top-[10px] w-[10px] border-t border-dotted border-[#a3abb6]" style={{ left: r.exp[0] - 2 }} /><Exp open={r.exp[1]} x={r.exp[0] - 2} /></>}
            {r.err && <span className="absolute left-[52px] font-bold text-[#ff2020] text-[14px]">!</span>}
            {r.check && <span className="w-[17px] shrink-0 flex"><Check /></span>}
            <span className="w-[20px] shrink-0 flex items-center"><TreeIcon k={r.icon} /></span>
            <span className={"flex-1 h-full flex items-center pl-[2px] -ml-[2px] whitespace-nowrap " + (r.bold ? "font-bold " : "") + (r.sel === "rh" ? "bg-[#1f4a63]" : r.sel === "plan" ? "bg-[#444444] border border-dotted border-[#bbb]" : "")}>{r.t}</span>
            {r.plus && <Plus size={12} strokeWidth={2.500} color="#888" className="absolute right-[6px]" />}
          </div>
        ))}
      </div>
      <div className="w-[18px] bg-[#222b38] flex flex-col items-center">
        <svg className="mt-[5px]" width="10" height="6" viewBox="0 0 10 6" fill="#6b7685"><path d="M5 0l5 6H0z" /></svg>
        <div className="w-[10px] h-[109px] bg-[#7a8699] mt-[6px]" />
        <svg className="mt-auto mb-[5px]" width="10" height="6" viewBox="0 0 10 6" fill="#6b7685"><path d="M0 0h10L5 6z" /></svg>
      </div>
    </div>
  );
}

const LeafI = () => <svg width="14" height="18" viewBox="0 0 14 18"><path d="M0 14l3-6 2 3 3-8 1 3 2-3-1 12-3-3-2 3-2-2-2 3z" fill="#1fbd3a" /></svg>;
const Bolt = () => <svg width="12" height="18" viewBox="0 0 12 18"><path d="M6 0l2 6 2 2-3 2-1 8-2-8-2-2 3-2z" fill="#1fbd3a" /></svg>;
const Box = ({ on }: { on?: boolean }) => (
  <span className="w-[14px] h-[15px] border border-[#7a8494] shrink-0 flex items-center justify-center">
    {on && <svg width="8" height="10" viewBox="0 0 8 10" fill="none" stroke="#ddd"><path d="M1 6l2 3 4-9" /></svg>}
  </span>
);
type PlanR = { t: string; leaf?: boolean; x: number; g: number[]; exp?: boolean; on?: boolean; hi?: boolean; ent?: string; par?: string; icon?: string };
const pg = [11, 33, 54], pg2 = [11, 33, 54, 75];
const plan: PlanR[] = [
  { t: "Finaliza Folha", leaf: true, x: 88, g: pg2, ent: "Script\\CommonsAll - SairM...", par: "Modulo (...", icon: "leaf" },
  { t: "eSocial", x: 67, g: pg, exp: true },
  { t: "Processamentos", x: 67, g: pg, exp: true, on: true, hi: true },
  { t: "Inicia Folha", leaf: true, x: 88, g: pg2, ent: "Script\\CommonsAll - Inicia...", par: "modulo (...", icon: "leaf" },
  { t: "Atualização Inteligente", leaf: true, x: 88, g: pg2, ent: "Script\\ExeAtualizaIntelige...", par: "[none]", icon: "bolt" },
  { t: "Seleciona Estabelecimento", leaf: true, x: 88, g: pg2, ent: "Script\\SelecaoEstab - Exe...", par: "sModulo ...", icon: "leaf" },
  { t: "Empregados", x: 88, g: pg2, exp: true },
  { t: "Cadastro de Controle", x: 88, g: pg2, exp: true },
  { t: "Controle Por Grupos", x: 88, g: pg2, exp: true },
  { t: "Férias", x: 88, g: pg2, exp: true },
  { t: "Mensal", x: 88, g: pg2, exp: true },
  { t: "13º Salário - 1ª Parcela", x: 88, g: pg2, exp: true },
  { t: "", x: 88, g: pg2 },
];

function PlanTable() {
  const hdr: [string, string][] = [["Tes...", "w-[35px]"], ["Execution entity", "w-[142px]"], ["Parameters", "w-[61px]"], ["Co...", "w-[33px]"], ["Time...", "w-[43px]"], ["On ...", "w-[39px]"], ["Link to...", "w-[51px]"], ["Envir...", "w-[44px]"]];
  return (
    <div className="h-[279px] flex border-2 border-[#566273] border-r-0 w-[938px] shrink-0 overflow-hidden">
      <div className="w-[921px] shrink-0 flex flex-col">
        <div className="h-[18px] shrink-0 flex items-center border-b border-[#4a5562] text-[#e8e8e8] pl-[2px] whitespace-nowrap tracking-[-0.3px]">
          <span className="w-[469px] shrink-0">Name</span>
          {hdr.map(([t, w]) => <span key={t} className={w + " shrink-0 overflow-hidden"}>{t}</span>)}
        </div>
        {plan.map((r, i) => (
          <div key={i} className={"relative h-[21px] shrink-0 flex items-center whitespace-nowrap " + (r.leaf ? "bg-[#161d26]" : "")} style={{ paddingLeft: r.x - 2 }}>
            <Guides g={r.g} stub={r.leaf ? 75 : undefined} color="border-[#626b78]" />
            {r.exp && <><span className="absolute top-[10px] w-[10px] border-t border-dotted border-[#626b78]" style={{ left: r.x - 13 }} /><Exp open={!!r.on} x={r.x - 13} /></>}
            {r.t && <Box on={r.on} />}
            {r.leaf ? (
              <span className="flex items-center h-full tracking-[-0.45px]">
                <span className="ml-[7px] w-[19px] flex">{r.icon === "leaf" ? <LeafI /> : <Bolt />}</span>
                <span className="w-[352px] text-[#72787f]">{r.t}</span>
                <span className="w-[26px]"><Box /></span>
                <span className="w-[143px] text-[#666c74] overflow-hidden">{r.ent}</span>
                <span className="w-[61px] text-[#666c74]">{r.par}</span>
                <span className="w-[33px] text-right text-[#666c74] pr-[8px]">1</span>
                <span className="w-[36px] text-right text-[#666c74]">0</span>
                <span className="w-[90px] pl-[4px] text-[#666c74]">Use ...</span>
                <span className="w-[36px] text-right text-[#666c74]">0</span>
              </span>
            ) : r.t ? (
              <span className="flex items-center h-full font-bold tracking-normal">
                <svg className={r.x === 67 ? "ml-[6px]" : "ml-[5px]"} width="15" height="17" viewBox="0 0 15 17" fill="none" stroke="#5a6270"><path d="M1 1h4l1 2h8v13H1z" /></svg>
                <span className={"ml-[6px] " + (r.hi ? "text-white" : "text-[#6e7478]")}>{r.t}</span>
              </span>
            ) : null}
          </div>
        ))}
      </div>
      <div className="w-[16px] flex flex-col items-center">
        <svg className="mt-[5px]" width="10" height="6" viewBox="0 0 10 6" fill="#6b7685"><path d="M5 0l5 6H0z" /></svg>
        <div className="w-[10px] h-[71px] bg-[#6e7a8c] mt-[114px]" />
        <svg className="mt-auto mb-[5px]" width="10" height="6" viewBox="0 0 10 6" fill="#6b7685"><path d="M0 0h10L5 6z" /></svg>
      </div>
    </div>
  );
}

const tabIconFile = <svg width="16" height="20" viewBox="0 0 16 20" fill="none"><path d="M1 1h7l4 4v14H1z" stroke="#ddd" /><rect x="6" y="9" width="9" height="11" fill="#0b8fe0" /><path d="M7.500 12h6M7.500 14.500h6M7.500 17h6" stroke="#04344f" /></svg>;

function TestComplete() {
  const wsTabs: [string, string][] = [["CommonsAll", "w-[113px]"], ["ExeAdiantamentoSalarial", "w-[176px]"], ["ObjAdiantamentoSalarial", "w-[176px]"]];
  return (
    <div className="w-[1366px] h-[900px] shrink-0 relative font-['Liberation_Sans',sans-serif] text-[12px] bg-black text-[#e8e8e8]">
      <div className="h-[768px] flex flex-col bg-[#222b38]">
        {/* title */}
        <div className="h-[29px] shrink-0 bg-[#1e3344] flex items-center text-[#6e7c8a] text-[14px]">
          <div className="ml-[7px] w-[15px] h-[15px] bg-[#39d5dc] border border-[#123] flex items-center justify-center"><div className="w-[9px] h-[9px] rounded-full border border-[#123]" /></div>
          <span className="ml-[5px] whitespace-nowrap">TestComplete - D:\TestComplete\RhTestComplet\RH.pjs</span>
          <div className="ml-auto flex items-center mr-[12px]">
            <Minus size={14} strokeWidth={1} color="#e8e8e8" />
            <svg className="ml-[24px]" width="13" height="14" viewBox="0 0 13 14" fill="none" stroke="#e8e8e8"><path d="M1 4h8v9H1zM4 4V1h8v9H9" /></svg>
            <X size={15} strokeWidth={1} color="#e8e8e8" className="ml-[24px]" />
          </div>
        </div>
        {/* menu */}
        <div className="h-[24px] shrink-0 flex items-center">
          <GripV cls="ml-[3px]" />
          <div className="ml-[11px] flex items-center text-[12.5px]">
            {([["F", "ile", "w-[30px]"], ["E", "dit", "w-[32px]"], ["V", "iew", "w-[37px]"], ["T", "est", "w-[32px]"], ["D", "ebug", "w-[47px]"], ["T", "ools", "w-[39px]"], ["H", "elp", "w-[37px]"]] as string[][]).map(([a, b, w]) => <span key={a + b} className={w}><span className="underline">{a}</span>{b}</span>)}
          </div>
          <Caret c="#a0a8b4" cls="ml-[2px]" />
        </div>
        {/* toolbar */}
        <div className="h-[35px] shrink-0 flex items-center">
          <GripV cls="ml-[3px]" />
          <span className="ml-[11px] text-[12.5px] w-[25px]"><span className="underline">N</span>ew</span>
          <Caret c="#a0a8b4" cls="ml-[4px]" />
          <Sep cls="ml-[10px]" />
          <div className="ml-[5px]"><FoldOpen /></div>
          <div className="ml-[7px] relative"><Fold /><svg className="absolute right-0 bottom-0" width="12" height="12" viewBox="0 0 12 12" stroke={D} strokeWidth="3"><path d="M1 1l10 10M11 1L1 11" /></svg></div>
          <Sep cls="ml-[8px]" />
          <svg className="ml-[6px]" width="26" height="28" viewBox="0 0 26 28"><path d="M1 1h10l5 4v6H10v14H1z" fill="#ccc" stroke="#222b38" /><path d="M3 2h6v4H3z" fill="#222b38" /><path d="M9 12h15v15H9z" fill="#0b8fe0" /><path d="M12 12h8v5h-8zM12 21h9v6h-9z" fill="#222b38" /></svg>
          <Caret c="#a0a8b4" cls="ml-[8px]" />
          <GripV cls="ml-[8px]" />
          <div className="ml-[8px]"><Cube><path d="M16 15h3v4h4v3h-4v4h-3v-4h-4v-3h4z" /></Cube></div>
          <div className="ml-[8px]"><Cube><circle cx="16" cy="18" r="7" fill="#222b38" stroke={D} strokeWidth="2" /></Cube></div>
          <svg className="ml-[7px]" width="24" height="26" viewBox="0 0 24 26" fill={D}><ellipse cx="10" cy="4" rx="9" ry="3.500" /><path d="M1 7c3 3 15 3 18 0v4c-3 3-15 3-18 0zM1 13c3 3 15 3 18 0v4c-3 3-15 3-18 0zM1 19c3 2 8 3 11 2v3c-5 1-9 0-11-2z" /><circle cx="18" cy="19" r="6" /></svg>
          <Caret c="#a0a8b4" cls="ml-[8px]" />
          <GripV cls="ml-[8px]" />
          <svg className="ml-[8px]" width="26" height="26" viewBox="0 0 26 26"><circle cx="11" cy="13" r="11" fill={D} /><path d="M11 6h10l4 4v15H11z" fill="#2a3038" stroke={D} strokeWidth="1.500" /><path d="M14 13h8M14 16h8M14 19h8" stroke={D} /></svg>
          <Caret c="#a0a8b4" cls="ml-[11px] scale-150" />
          <svg className="ml-[11px]" width="22" height="28" viewBox="0 0 22 28" fill="#3f454d"><path d="M0 0l22 14L0 28z" /></svg>
          <div className="ml-[9px] w-[23px] h-[23px] bg-[#0aa5f5] border border-[#222]" />
          <span className="ml-[5px] text-[12.5px] w-[24px]">Stop</span>
          <div className="ml-[5px] w-[29px] h-[30px] border border-[#8a94a3] bg-[#3a424e] flex items-center justify-center relative">
            <Bug />
            <svg className="absolute right-[1px] bottom-[1px]" width="16" height="16" viewBox="0 0 16 16" fill="none" stroke="#0b8fe0" strokeWidth="2"><circle cx="8" cy="8" r="5" /><path d="M8 0v16M0 8h16" /></svg>
          </div>
          <Caret c="#a0a8b4" cls="ml-[6px]" />
          <GripV cls="ml-[8px]" />
          <div className="ml-[7px] flex gap-[2px]"><div className="w-[11px] h-[30px] bg-[#0aa5f5]" /><div className="w-[11px] h-[30px] bg-[#0aa5f5]" /></div>
          <Sep cls="ml-[8px]" />
          <div className="ml-[4px]"><Rows /></div>
          <div className="ml-[6px]"><Rows2 /></div>
          <div className="ml-[6px]"><Rows3 /></div>
          <Sep cls="ml-[7px]" />
          <svg className="ml-[5px]" width="24" height="28" viewBox="0 0 24 28" fill={D}><path d="M1 0h22a1 1 0 0 1 1 1v26a1 1 0 0 1-1 1H1a1 1 0 0 1-1-1V1a1 1 0 0 1 1-1zm2 3v9h18V3zM3 16h4v3H3zM10 16h4v3h-4zM17 16h4v3h-4zM3 22h4v3H3zM10 22h4v3h-4zM17 22h4v3h-4z" fillRule="evenodd" /></svg>
          <Sep cls="ml-[8px]" />
          <div className="ml-[5px] relative"><Bug /><svg className="absolute right-[0px] bottom-0" width="14" height="18" viewBox="0 0 14 18" fill="#d3202c"><circle cx="9" cy="6" r="5" /><circle cx="5" cy="12" r="5" /></svg></div>
          <div className="ml-[7px] relative"><Bug /><svg className="absolute right-[-1px] bottom-[-1px]" width="15" height="15" viewBox="0 0 15 15" fill="none" stroke="#0b8fe0" strokeWidth="2.500"><circle cx="6.500" cy="6.500" r="5" /><path d="M10 10l4 4" /></svg></div>
          <div className="ml-[7px] relative"><Bug /><span className="absolute right-[0px] bottom-[-3px] text-[#0b8fe0] text-[18px] italic font-bold leading-none font-['Liberation_Serif',serif]">x</span></div>
          <div className="ml-[8px] relative"><Bug /><svg className="absolute right-0 bottom-0" width="12" height="12" viewBox="0 0 12 12" stroke="#0b8fe0" strokeWidth="2"><path d="M0 2h12M0 6h12M0 10h12" /></svg></div>
          <svg className="ml-[12px]" width="16" height="32" viewBox="0 0 16 32"><rect width="16" height="32" rx="3" fill="#c4c4c4" /><rect x="2" y="4" width="12" height="22" fill="#222b38" /><path d="M5 8h2v2H5zM9 8h2v2H9zM5 12h2v2H5zM9 12h2v2H9zM7 16h2v2H7zM7 20h2v2H7z" fill="#0b8fe0" /></svg>
          <span className="ml-[8px] text-[12px] tracking-[-0.1px] whitespace-nowrap">Show Mobile Screen</span>
          <Caret c="#a0a8b4" cls="ml-[8px]" />
        </div>
        {/* view tabs */}
        <div className="h-[4px] shrink-0" />
        <div className="h-[28px] shrink-0 flex items-end tracking-[-0.3px]">
          <div className="w-[105px] h-[28px] bg-[#4a5562] flex items-center justify-center whitespace-nowrap">Project Workspace</div>
          <div className="w-[87px] h-[25px] bg-[#161d26] border border-[#4a5562] flex items-center justify-center whitespace-nowrap">Object Browser</div>
        </div>
        <div className="h-[3px] shrink-0 bg-[#4a5562]" />

        {/* main */}
        <div className="h-[581px] shrink-0 flex text-[11.5px] tracking-[-0.25px] leading-none">
          <div className="w-[395px] shrink-0 flex flex-col">
            <div className="h-[22px] shrink-0 bg-[#4a5562] flex items-center pl-[6px]">Project Explorer
              <div className="ml-auto flex items-center gap-[6px] pr-[5px]">
                <span className="font-bold text-[13px]">?</span>
                <div className="w-[9px] h-[9px] border border-[#eee]" />
                <svg width="9" height="11" viewBox="0 0 9 11" fill="#eee"><path d="M2 0h5v5h2v1H5v5H4V6H0V5h2z" /></svg>
                <X size={12} strokeWidth={2} color="#eee" />
              </div>
            </div>
            <div className="h-[35px] shrink-0 flex items-center">
              <GripV cls="ml-[3px]" />
              <div className="ml-[7px]"><DocPlus /></div>
              <div className="ml-[6px]"><DocPlus /></div>
              <div className="ml-[6px] relative"><Doc /><div className="absolute right-[-4px] bottom-0"><Fold w={15} h={12} /></div></div>
              <Sep cls="ml-[6px]" />
              <svg className="ml-[5px]" width="24" height="26" viewBox="0 0 24 26" fill="none"><path d="M3 3h12l5 5v15H3z" stroke="#ddd" strokeWidth="1.500" /><path d="M7 8h4v4H7z" fill="#ddd" /><path d="M10 15h8M10 19h10M12 23h12" stroke="#0b8fe0" strokeWidth="2.500" /></svg>
              <Sep cls="ml-[6px]" />
              <div className="ml-[6px]"><DocRun /></div>
              <svg className="ml-[6px]" width="24" height="26" viewBox="0 0 24 26" fill={D}><path d="M12 0l12 12-12 14L0 13z" /><path d="M8 8h10v3h-3v8h-3v-8H8z" fill="#222b38" /></svg>
              <Caret c="#a0a8b4" cls="ml-[7px]" />
            </div>
            <div className="leading-[14px]"><Tree /></div>
            <div className="h-[1px] shrink-0" />
            <div className="h-[20px] shrink-0 flex">
              <div className="w-[78px] border border-[#4a5562] bg-[#161d26] flex items-center justify-center">Bookmarks</div>
              <div className="w-[139px] border border-[#4a5562] border-l-0 bg-[#161d26] flex items-center justify-center whitespace-nowrap">Search/Replace Results</div>
              <div className="w-[55px] bg-[#4a5562] flex items-center justify-center">To Do</div>
            </div>
          </div>
          <div className="ml-[6px] w-[965px] shrink-0 flex flex-col">
            <div className="h-[22px] shrink-0 bg-[#4a5562] flex items-center pl-[6px]">Workspace
              <div className="ml-auto flex items-center gap-[6px] pr-[5px]">
                <span className="font-bold text-[13px]">?</span>
                <div className="w-[9px] h-[9px] border border-[#eee]" />
                <X size={12} strokeWidth={2} color="#eee" />
              </div>
            </div>
            <div className="h-[35px] shrink-0 flex items-end border-b-2 border-[#4a5562] relative">
              <div className="w-[160px] h-[30px] bg-[#4a5562] flex items-center pl-[6px] whitespace-nowrap">
                <svg width="18" height="20" viewBox="0 0 18 20" fill="none"><path d="M3 5h2V1h9v11h-3M3 5H1v13h10v-5" stroke="#ddd" /><path d="M9 12h6M10 15h7M12 18h6" stroke="#0b8fe0" strokeWidth="2" /></svg>
                <span className="ml-[8px] flex-1">[RH] - Execution Plan</span>
                <X size={12} strokeWidth={2} color="#eee" className="mr-[6px]" />
              </div>
              {wsTabs.map(([t, w]) => (
                <div key={t} className={w + " h-[26px] bg-[#161d26] border-r border-[#4a5562] flex items-center pl-[5px] whitespace-nowrap"}>
                  {tabIconFile}<span className="ml-[10px] flex-1 overflow-hidden">{t}</span>
                  <X size={12} strokeWidth={2} color="#eee" className="mr-[7px]" />
                </div>
              ))}
              <div className="w-[177px] h-[26px] bg-[#161d26] border-r border-[#4a5562] flex items-center pl-[5px] whitespace-nowrap">
                <svg width="18" height="22" viewBox="0 0 18 22"><rect x="0" y="1" width="8" height="8" rx="1" fill="#d33" /><path d="M2 3l4 4M6 3L2 7" stroke="#fff" /><rect x="0" y="12" width="8" height="8" fill="#18b018" /><path d="M1 16l2 2 4-4" stroke="#fff" fill="none" /><path d="M12 4l6 11H6z" fill="#ffcc22" /><path d="M12 8v4" stroke="#333" strokeWidth="1.500" /></svg>
                <span className="ml-[9px] flex-1">RH 09/05/2022 17:15:46</span>
                <X size={12} strokeWidth={2} color="#eee" className="mr-[9px]" />
              </div>
              <div className="ml-auto self-center mt-[2px] flex items-center pr-[3px]">
                <svg width="5" height="8" viewBox="0 0 5 8" fill="#ddd"><path d="M5 0v8L0 4z" /></svg>
                <svg className="ml-[9px]" width="5" height="8" viewBox="0 0 5 8" fill="#ddd"><path d="M0 0v8l5-4z" /></svg>
                <svg className="ml-[8px]" width="10" height="9" viewBox="0 0 10 9" fill="#ddd"><path d="M0 0h10v2H0zM0 3h10L5 9z" /></svg>
              </div>
            </div>
            <div className="h-[34px] shrink-0 flex items-center text-[#5e656d]">
              <GripV cls="ml-[3px]" />
              <div className="ml-[8px]"><DocPlus /></div>
              <span className="ml-[3px] w-[74px] whitespace-nowrap">New Test Item</span>
              <div className="ml-[7px] relative"><Doc /><div className="absolute left-[5px] top-0"><DocPlus /></div></div>
              <span className="ml-[4px] w-[104px] whitespace-nowrap">New Child Test Item</span>
              <div className="ml-[9px] relative"><Fold /><div className="absolute right-[-1px] bottom-[-3px] text-[#4a4f55]"><Plus size={14} strokeWidth={3} /></div></div>
              <div className="ml-[7px] relative"><Fold /><svg className="absolute right-0 bottom-0" width="11" height="12" viewBox="0 0 11 12" stroke={D} strokeWidth="2"><path d="M0 2h11M0 6h11M0 10h11" /></svg></div>
              <div className="ml-[7px] relative"><Fold /><div className="absolute right-[-1px] bottom-[-3px] text-[#4a4f55]"><Plus size={14} strokeWidth={3} /></div></div>
              <Sep cls="ml-[7px]" />
              <svg className="ml-[6px]" width="22" height="26" viewBox="0 0 22 26" fill="none" stroke={D} strokeWidth="2"><path d="M1 5h20M7 5V2h8v3M3 5v20h16V5M8 9v12M11 9v12M14 9v12" /></svg>
              <Sep cls="ml-[7px]" />
              <div className="ml-[5px]"><DocRun /></div>
              <svg className="ml-[2px]" width="24" height="26" viewBox="0 0 24 26" fill={D}><path d="M8 1h10l5 5v16H8zM1 14l10 6-10 6z" fillRule="evenodd" /></svg>
              <Sep cls="ml-[8px]" />
              <svg className="ml-[14px]" width="10" height="24" viewBox="0 0 10 24" fill={D}><path d="M5 0l5 8H7v16H3V8H0z" /></svg>
              <svg className="ml-[21px]" width="10" height="24" viewBox="0 0 10 24" fill={D}><path d="M5 24l5-8H7V0H3v16H0z" /></svg>
              <svg className="ml-[11px]" width="22" height="10" viewBox="0 0 22 10" fill={D}><path d="M0 5l8-5v3h14v4H8v3z" /></svg>
              <svg className="ml-[9px]" width="22" height="10" viewBox="0 0 22 10" fill={D}><path d="M22 5l-8-5v3H0v4h14v3z" /></svg>
            </div>
            <div className="flex h-[279px] shrink-0 text-[12px] tracking-normal leading-[14px]">
              <PlanTable />
              <div className="ml-[8px] w-[19px] bg-[#4a5562] flex flex-col items-center overflow-hidden">
                <span className="text-[14px] font-bold h-[18px]">«</span>
                <div className="flex-1 flex items-end overflow-hidden -mb-[8px]">
                  <span className="[writing-mode:vertical-rl] rotate-180 whitespace-nowrap font-bold text-[9px] tracking-normal font-['DejaVu_Sans',sans-serif]">Properties / Parallel Device Cloud Environment:</span>
                </div>
              </div>
            </div>
            <div className="h-[7px] shrink-0" />
            <div className="h-[22px] shrink-0 bg-[#4a5562] flex items-center pl-[6px]">Call Stack
              <div className="ml-auto flex items-center gap-[6px] pr-[6px]">
                <span className="font-bold text-[13px]">?</span>
                <svg width="9" height="11" viewBox="0 0 9 11" fill="#eee"><path d="M2 0h5v5h2v1H5v5H4V6H0V5h2z" /></svg>
                <X size={12} strokeWidth={2} color="#eee" />
              </div>
            </div>
            <div className="h-[128px] shrink-0 mt-px border border-[#7a8699] border-b-2 flex flex-col">
              <div className="h-[19px] shrink-0 border-b border-[#4a5562] flex items-center pl-[3px]">Call Stack</div>
              <div className="flex-1 bg-[#161d26]" />
            </div>
            <div className="h-[30px] shrink-0 flex items-start">
              <div className="w-[61px] h-[30px] bg-[#4a5562] flex items-center justify-center">Call Stack</div>
              <div className="w-[42px] h-[26px] bg-[#161d26] border border-[#4a5562] border-t-0 border-l-0 flex items-center justify-center">Locals</div>
              <div className="w-[64px] h-[26px] bg-[#161d26] border border-[#4a5562] border-t-0 border-l-0 flex items-center justify-center whitespace-nowrap">Watch List</div>
              <div className="w-[70px] h-[26px] bg-[#161d26] border border-[#4a5562] border-t-0 border-l-0 flex items-center justify-center">Breakpoints</div>
            </div>
          </div>
        </div>

        {/* status */}
        <div className="h-[24px] shrink-0 flex items-end pb-[2px] text-[11.5px] leading-none">
          <div className="ml-[49px] w-[43px] h-[15px] border-l border-[#ddd] flex items-center justify-center text-[#6e7680]">CAPS</div>
          <div className="w-[39px] h-[15px] border-l border-[#ddd] flex items-center justify-center text-[#ddd]">NUM</div>
          <div className="w-[42px] h-[15px] border-l border-[#ddd] flex items-center justify-center text-[#6e7680]">SCRL</div>
          <div className="w-[43px] h-[15px] border-l border-[#ddd] flex items-center justify-center text-[#ddd]">OVR</div>
          <div className="w-[53px] h-[15px] border-l border-[#ddd]" />
          <div className="w-px h-[15px] bg-[#ddd]" />
          <div className="ml-auto mr-[5px] w-px h-[15px] bg-[#ddd]" />
        </div>
        <Taskbar>
          <div className="flex-1 flex items-center justify-end pr-[6px] text-center text-[#eee] text-[12px] leading-[18px]">
            <div>17:18<br />09/05/2022</div>
          </div>
        </Taskbar>
      </div>

      {/* floating run panel */}
      <div className="absolute left-[1255px] top-[24px] w-[101px] h-[40px] border border-[#7a8699] bg-[#222b38] flex items-center">
        <div className="ml-[4px] w-[28px] h-[28px] bg-[#39d5dc] flex items-center justify-center">
          <svg width="24" height="24" viewBox="0 0 24 24" fill="none" stroke="#123" strokeWidth="1.500"><path d="M12 1l3 3h5v5l3 3-3 3v5h-5l-3 3-3-3H4v-5l-3-3 3-3V4h5z" /><circle cx="12" cy="12" r="6" /><path d="M9 12l2 2 4-4" /></svg>
        </div>
        <div className="ml-[6px] w-px h-[34px] bg-[#7a8699]" />
        <div className="ml-[9px] flex gap-[2px]"><div className="w-[7px] h-[18px] bg-[#0b9bf0]" /><div className="w-[7px] h-[18px] bg-[#0b9bf0]" /></div>
        <div className="ml-[5px] w-[26px] h-[26px] bg-[#3a4a5f] flex items-center justify-center"><div className="w-[16px] h-[16px] bg-[#0b9bf0]" /></div>
        <div className="absolute right-[-5px] top-[13px] w-[12px] h-[12px] rounded-full border-[3px] border-[#1f86d8] bg-[#222b38]" />
        <svg className="absolute left-[85px] top-[20px]" width="12" height="19" viewBox="0 0 12 19"><path d="M0 0v15l4-3 2 6 3-1-2-6h5z" fill="#fff" stroke="#000" strokeWidth="0.500" /></svg>
      </div>
      {/* tooltip */}
      <div className="absolute left-[1143px] top-[68px] w-[215px] h-[49px] border border-[#7a8699] bg-[#222b38] text-[11.5px] tracking-[-0.35px] leading-none whitespace-nowrap flex flex-col">
        <div className="mt-[4px] h-[14px] pl-[12px] flex items-center">Waiting for VCLObject('FRhPendeSocial')</div>
        <div className="mx-[3px] mt-[1px] h-[10px] bg-[#ececec] flex items-center px-[2px] gap-px overflow-hidden">
          {Array.from({ length: 38 }).map((_, i) => <div key={i} className="w-[4px] h-[6px] bg-[#13ab2a] shrink-0" />)}
        </div>
        <div className="mt-[3px] pl-[5px]">RH <span className="text-[#1f86d8]">|</span> Executa Processamento de Rescisão</div>
      </div>
    </div>
  );
}

export default function App() {
  return (
    <div className="w-[2966px] h-[900px] flex overflow-hidden bg-black">
      <Wps />
      <TestComplete />
    </div>
  );
}
